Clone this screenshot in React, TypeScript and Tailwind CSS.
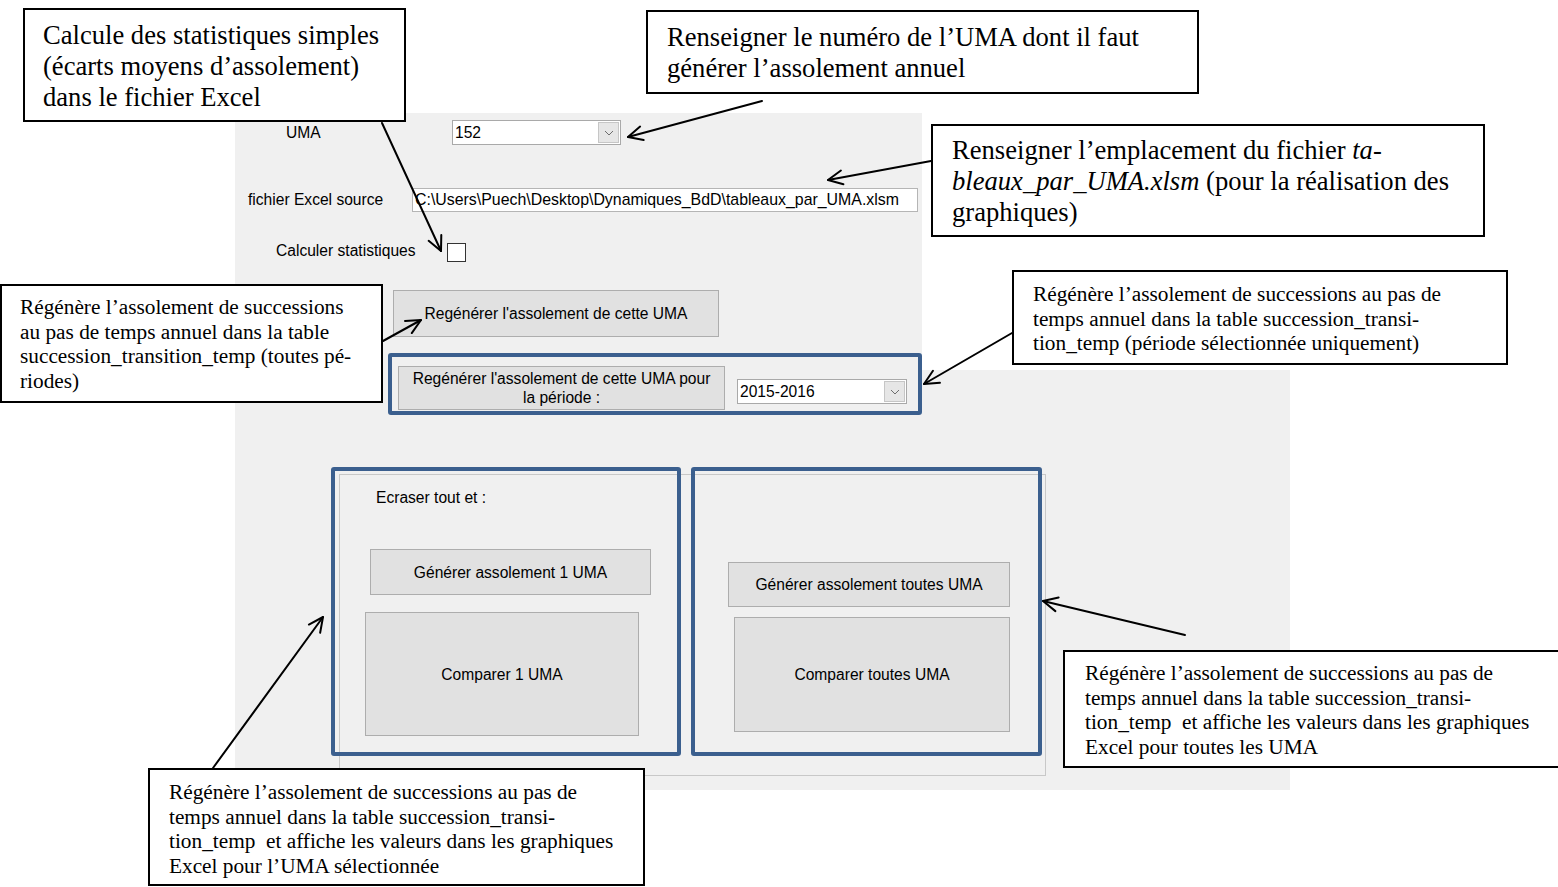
import React from "react";

const formFont = "font-['Liberation_Sans',Arial,sans-serif]";
const noteFont = "font-['Liberation_Serif','Times_New_Roman',serif]";

function Combo({ value, className }: { value: string; className: string }) {
  return (
    <div className={`flex h-[25px] border border-[#a9a9a9] bg-white ${className}`}>
      <span className="flex-1 pl-[2px] leading-[23px] text-black">{value}</span>
      <span className="m-[1px] flex w-[21px] items-center justify-center border border-[#c6c6c6] bg-[#e6e6e6]">
        <svg width="10" height="6" viewBox="0 0 10 6">
          <path d="M1 1 L5 5 L9 1" fill="none" stroke="#6d6d6d" strokeWidth="1" />
        </svg>
      </span>
    </div>
  );
}

function WinButton({ children, className }: { children: React.ReactNode; className: string }) {
  return (
    <div
      className={`flex items-center justify-center border border-[#adadad] bg-[#e1e1e1] text-center leading-[19px] text-black ${className}`}
    >
      {children}
    </div>
  );
}

function Note({ className, children }: { className: string; children: React.ReactNode }) {
  return (
    <div className={`absolute border-2 border-black bg-white text-black ${noteFont} ${className}`}>
      {children}
    </div>
  );
}

const arrows: [number, number, number, number][] = [
  [762, 101, 628, 137],
  [931, 161, 828, 180],
  [382, 123, 441, 251],
  [383, 341, 421, 320],
  [1012, 333, 924, 384],
  [1185, 635, 1043, 601],
  [213, 768, 323, 617],
];

function head(x1: number, y1: number, x2: number, y2: number) {
  const len = 16;
  const spread = 0.45;
  const a = Math.atan2(y2 - y1, x2 - x1);
  const p1 = [x2 - len * Math.cos(a - spread), y2 - len * Math.sin(a - spread)];
  const p2 = [x2 - len * Math.cos(a + spread), y2 - len * Math.sin(a + spread)];
  return `M${p1[0]},${p1[1]} L${x2},${y2} L${p2[0]},${p2[1]}`;
}

export default function App() {
  return (
    <div className={`relative h-[887px] w-[1558px] overflow-hidden bg-white ${formFont}`}>
      {/* the form */}
      <div className="pl-[235px] pt-[113px] text-[15.6px] text-black">
        <div className="h-[257px] w-[687px] bg-[#f0f0f0] pt-[7px]">
          <div className="flex h-[25px] items-center">
            <span className="ml-[51px] w-[166px]">UMA</span>
            <Combo value="152" className="w-[169px]" />
          </div>
          <div className="mt-[43px] flex h-[24px] items-center">
            <span className="ml-[13px] w-[164px]">fichier Excel source</span>
            <div className="h-[24px] w-[506px] border border-[#b5b5b5] bg-white pl-[2px] text-[15.9px] leading-[22px]">
              C:\Users\Puech\Desktop\Dynamiques_BdD\tableaux_par_UMA.xlsm
            </div>
          </div>
          <div className="mt-[31px] flex h-[19px] items-center">
            <span className="ml-[41px] -mt-[3px] w-[171px]">Calculer statistiques</span>
            <span className="h-[19px] w-[19px] border border-[#333] bg-white" />
          </div>
          <WinButton className="ml-[158px] mt-[28px] h-[47px] w-[326px]">
            Regénérer l'assolement de cette UMA
          </WinButton>
          <div className="relative z-10 ml-[153px] mt-[16px] flex h-[62px] w-[534px] items-start rounded-[3px] border-4 border-[#3b5f8e]">
            <WinButton className="ml-[6px] mt-[9px] h-[44px] w-[327px]">
              Regénérer l'assolement de cette UMA pour
              <br />
              la période :
            </WinButton>
            <Combo value="2015-2016" className="ml-[12px] mt-[22px] w-[170px]" />
          </div>
        </div>

        <div className="h-[420px] w-[1055px] bg-[#f0f0f0] pl-[96px] pt-[97px]">
          <div className="relative flex gap-[10px]">
            <div className="absolute left-[8px] top-[7px] h-[302px] w-[707px] border border-[#c8c8c8]" />
            <div className="relative flex h-[289px] w-[350px] flex-col rounded-[3px] border-4 border-[#3b5f8e] pt-[17px]">
              <span className="ml-[41px] leading-[19px]">Ecraser tout et :</span>
              <WinButton className="ml-[35px] mt-[42px] h-[46px] w-[281px]">
                Générer assolement 1 UMA
              </WinButton>
              <WinButton className="ml-[30px] mt-[17px] h-[124px] w-[274px]">Comparer 1 UMA</WinButton>
            </div>
            <div className="relative flex h-[289px] w-[351px] flex-col rounded-[3px] border-4 border-[#3b5f8e] pt-[91px]">
              <WinButton className="ml-[33px] h-[45px] w-[282px]">Générer assolement toutes UMA</WinButton>
              <WinButton className="ml-[39px] mt-[10px] h-[115px] w-[276px]">Comparer toutes UMA</WinButton>
            </div>
          </div>
        </div>
      </div>

      {/* callouts */}
      <Note className="left-[23px] top-[8px] h-[114px] w-[383px] pl-[18px] pt-[10px] text-[26.6px] leading-[31px]">
        Calcule des statistiques simples
        <br />
        (écarts moyens d’assolement)
        <br />
        dans le fichier Excel
      </Note>
      <Note className="left-[646px] top-[10px] h-[84px] w-[553px] pl-[19px] pt-[10px] text-[26.6px] leading-[31px]">
        Renseigner le numéro de l’UMA dont il faut
        <br />
        générer l’assolement annuel
      </Note>
      <Note className="left-[931px] top-[124px] h-[113px] w-[554px] pl-[19px] pt-[9px] text-[26.6px] leading-[31px]">
        Renseigner l’emplacement du fichier <i>ta-</i>
        <br />
        <i>bleaux_par_UMA.xlsm</i> (pour la réalisation des
        <br />
        graphiques)
      </Note>
      <Note className="left-0 top-[284px] h-[119px] w-[383px] pl-[18px] pt-[9px] text-[21.3px] leading-[24.6px]">
        Régénère l’assolement de successions
        <br />
        au pas de temps annuel dans la table
        <br />
        succession_transition_temp (toutes pé-
        <br />
        riodes)
      </Note>
      <Note className="left-[1012px] top-[270px] h-[95px] w-[496px] pl-[19px] pt-[10px] text-[21.3px] leading-[24.6px]">
        Régénère l’assolement de successions au pas de
        <br />
        temps annuel dans la table succession_transi-
        <br />
        tion_temp (période sélectionnée uniquement)
      </Note>
      <Note className="left-[1063px] top-[650px] h-[118px] w-[520px] whitespace-pre pl-[20px] pt-[9px] text-[21.3px] leading-[24.6px]">
        {"Régénère l’assolement de successions au pas de\ntemps annuel dans la table succession_transi-\ntion_temp  et affiche les valeurs dans les graphiques\nExcel pour toutes les UMA"}
      </Note>
      <Note className="left-[148px] top-[768px] h-[118px] w-[497px] whitespace-pre pl-[19px] pt-[10px] text-[21.3px] leading-[24.6px]">
        {"Régénère l’assolement de successions au pas de\ntemps annuel dans la table succession_transi-\ntion_temp  et affiche les valeurs dans les graphiques\nExcel pour l’UMA sélectionnée"}
      </Note>

      {/* arrows */}
      <svg className="pointer-events-none absolute left-0 top-0" width="1558" height="887">
        {arrows.map(([x1, y1, x2, y2], i) => (
          <g key={i} fill="none" stroke="#000" strokeWidth="2" strokeLinecap="round" strokeLinejoin="round">
            <line x1={x1} y1={y1} x2={x2} y2={y2} />
            <path d={head(x1, y1, x2, y2)} />
          </g>
        ))}
      </svg>
    </div>
  );
}
